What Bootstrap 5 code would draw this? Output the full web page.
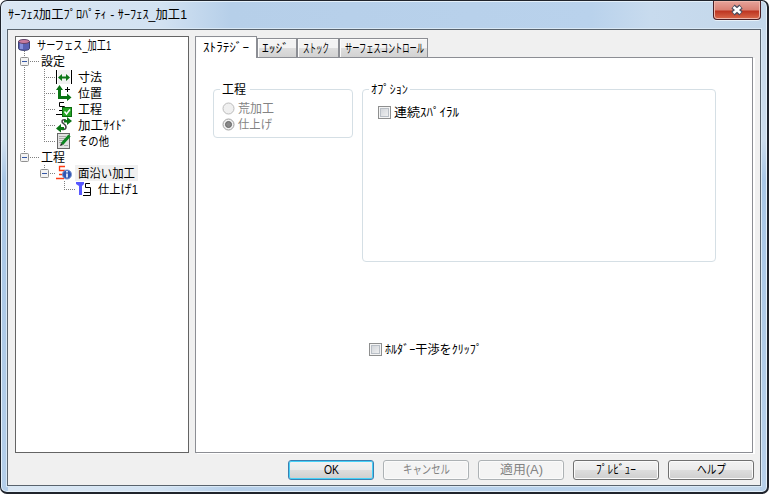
<!DOCTYPE html>
<html lang="ja">

<head>
    <meta charset="UTF-8">
    <meta name="viewport" content="width=device-width, initial-scale=1.0">
    <title>ｻｰﾌｪｽ加工ﾌﾟﾛﾊﾟﾃｨ</title>
    <link href="https://cdn.jsdelivr.net/npm/bootstrap@5.3.0/dist/css/bootstrap.min.css" rel="stylesheet">
    <style>
        body {
            width: 769px;
            height: 494px;
            overflow: hidden;
            background: #fff;
            color: #000;
            font: 12px/16px "Liberation Sans", "Noto Sans CJK JP", sans-serif;
        }

        .ventana {
            width: 769px;
            height: 494px;
            border: 1px solid #20242c;
            border-width: 1px 2px 2px 1px;
            border-radius: 7px;
            padding: 0 6px 6px;
            background:
                linear-gradient(#d3e1ef 0 110px, #a9c7e6 150px, #b5cfea 100%) 0 29px / 7px 100% no-repeat,
                linear-gradient(#ccdcec 0 110px, #a9c7e6 150px, #b9d1ea 100%) 100% 29px / 7px 100% no-repeat,
                linear-gradient(90deg, #dbe7f3 0, #d2e2f2 160px, #b6cfe9 230px, #b9d2ec 590px, #c8dbee 650px, #c3d7ea 100%);
            box-shadow: inset 0 0 0 1px #e4f0fa;
        }

        .titulo {
            height: 28px;
            padding: 0 0 0 1px;
        }

        .cerrar {
            width: 48px;
            height: 19px;
            border: 1px solid #4b1f25;
            border-top: 0;
            border-radius: 0 0 4px 4px;
            background: linear-gradient(#e6a49b 0, #d98073 9px, #bd3420 10px, #d96a4c 100%);
            box-shadow: inset 0 0 0 1px #efb6aa, 0 1px 0 #e8f1f8;
        }

        .cliente {
            height: 457px;
            border: 1px solid #59636d;
            background: #f0f0f0;
            padding: 6px 7px 0;
            box-shadow: 0 0 0 1px #d9e8f5;
        }

        .txt {
            display: inline-block;
            white-space: pre;
            transform-origin: 0 50%;
        }

        .arbol {
            width: 174px;
            height: 417px;
            border: 1px solid #646464;
            background: #fff;
        }

        .fila {
            height: 16px;
        }

        .fila svg {
            flex: none;
        }

        .nivel0 { padding-left: 1px; }
        .nivel1 { padding-left: 25px; }
        .nivel2 { padding-left: 40px; }
        .nivel3 { padding-left: 60px; }

        .nodo {
            height: 16px;
            margin-left: 3px;
            padding: 0 3px;
        }

        .nodo.sel {
            background: #f0f0f0;
        }

        .lineas {
            left: 0;
            top: 0;
        }

        .pestanas {
            height: 21px;
            padding-right: 1px;
        }

        .pestana {
            height: 19px;
            border: 1px solid #8c8e94;
            border-bottom: 0;
            background: linear-gradient(#f3f3f3 0 50%, #dedede 50%, #d2d2d2);
            box-shadow: inset 1px 1px 0 #fcfcfc;
            padding: 1px 0 0 4px;
        }

        .pestana.activa {
            height: 22px;
            margin-bottom: -1px;
            background: #fff;
            padding: 2px 0 0 7px;
            z-index: 1;
        }

        .panel {
            width: 558px;
            height: 396px;
            border: 1px solid #8c8e94;
            background: #fff;
            padding: 25px 17px;
            box-shadow: 2px 1px 0 #fff;
        }

        .grupo {
            border: 1px solid #d5dfe5;
            border-radius: 4px;
        }

        .leyenda {
            height: 16px;
            margin-top: -9px;
            background: #fff;
            align-self: flex-start;
        }

        .casilla {
            width: 13px;
            height: 13px;
            border: 1px solid #8e8f8f;
            background: linear-gradient(135deg, #cbcfd5, #f6f6f6);
            box-shadow: inset 0 0 0 1px #f4f4f4, inset 0 0 0 2px #b9bfc6;
        }

        .boton {
            width: 86px;
            height: 20px;
            padding: 0;
            border: 1px solid #707070;
            border-radius: 3px;
            background: linear-gradient(#f2f2f2 0, #ebebeb 49%, #dddddd 50%, #cfcfcf);
            box-shadow: inset 0 0 0 1px #fbfbfb;
            color: #000;
            font-size: 12px;
            line-height: 16px;
        }

        .boton.principal {
            border-color: #3c7fb1;
            box-shadow: inset 0 0 0 1px #46d1f8;
        }

        .boton:disabled {
            opacity: 1;
            border-color: #adb2b5;
            background: #f4f4f4;
            color: #838383;
        }

        .gris {
            color: #838383;
        }
    </style>
</head>

<body>
    <div class="ventana">
        <div class="titulo d-flex justify-content-between align-items-start">
            <span class="txt" style="margin-top: 5px" data-w="179">ｻｰﾌｪｽ加工ﾌﾟﾛﾊﾟﾃｨ - ｻｰﾌｪｽ_加工1</span>
            <div class="cerrar d-flex justify-content-center align-items-center">
                <svg width="14" height="12" viewBox="0 0 14 12">
                    <path d="M3 2.500L11 9.500M11 2.500L3 9.500" stroke="#4b4f60" stroke-width="5" />
                    <path d="M3.500 3L10.500 9M10.500 3L3.500 9" stroke="#fff" stroke-width="2.600" />
                </svg>
            </div>
        </div>
        <div class="cliente">
            <div class="d-flex justify-content-between" style="height: 417px">
                <div class="arbol position-relative">
                    <!-- líneas y botones de plegado -->
                    <svg class="lineas position-absolute" width="100" height="170">
                        <path d="M8.500 14V120M14 24.500H24M14 120.500H24M28.500 32V104M28 40.500H40M28 56.500H40M28 72.500H40M28 88.500H40M28 104.500H40M28.500 128V132M34 136.500H40M48.500 144V152M48 152.500H60" fill="none" stroke="#808080" stroke-dasharray="1 1" />
                        <g fill="#f3f3f3" stroke="#919191">
                            <rect x="4.500" y="20.500" width="8" height="8" rx="1" />
                            <rect x="4.500" y="116.500" width="8" height="8" rx="1" />
                            <rect x="24.500" y="132.500" width="8" height="8" rx="1" />
                        </g>
                        <path d="M6 24.500H11M6 120.500H11M26 136.500H31" stroke="#3557a5" />
                    </svg>
                    <div class="fila nivel0 d-flex">
                        <svg width="14" height="16">
                            <path d="M1.500 4.500V11.500C1.500 14 12.500 14 12.500 11.500V4.500Z" fill="#5a62b4" stroke="#3f4373" />
                            <path d="M3 6V12H6V6Z" fill="#8690dc" />
                            <ellipse cx="7" cy="4.500" rx="5.500" ry="2" fill="#c77b9f" stroke="#63456a" />
                        </svg>
                        <div class="nodo"><span class="txt" data-w="74">サーフェス_加工1</span></div>
                    </div>
                    <div class="fila nivel1"><span class="txt" data-w="24">設定</span></div>
                    <div class="fila nivel2 d-flex">
                        <svg width="16" height="16">
                            <path d="M2 1H14V15H2Z" fill="#f1f1f1" />
                            <path d="M.500 1V15M15.500 1V15" stroke="#000" />
                            <path d="M2 8.500L6 5V7.500H10V5L14 8.500L10 12V9.500H6V12Z" fill="#0a7414" />
                        </svg>
                        <div class="nodo"><span class="txt" data-w="24">寸法</span></div>
                    </div>
                    <div class="fila nivel2 d-flex">
                        <svg width="16" height="16">
                            <path d="M0 5L3.500 0L7 5H5V11H11V8.500L15.500 12.500L11 16V14H2V5Z" fill="#0a7414" />
                            <path d="M9 4.500H14M11.500 2V7" stroke="#000" />
                        </svg>
                        <div class="nodo"><span class="txt" data-w="24">位置</span></div>
                    </div>
                    <div class="fila nivel2 d-flex">
                        <svg width="16" height="16">
                            <path d="M8 1.500H3.500V5.500H8.500V9.500H3M0 13.500H8" fill="none" stroke="#000" />
                            <rect x="6.500" y="6.500" width="9" height="9" fill="#26a526" stroke="#0c6b10" />
                            <path d="M8.500 10.500L10.500 13L14 8.500" fill="none" stroke="#fff" stroke-width="1.500" />
                        </svg>
                        <div class="nodo"><span class="txt" data-w="24">工程</span></div>
                    </div>
                    <div class="fila nivel2 d-flex">
                        <svg width="16" height="16">
                            <path d="M10 3C5 2 5 5 8 7S11 14 5 12" fill="none" stroke="#444" stroke-width="1.500" />
                            <path d="M8 3H11V0L16 4L11 8V5.500H8ZM8 10H5V7L0 11.500L5 15.500V13H8Z" fill="#0a7414" />
                        </svg>
                        <div class="nodo"><span class="txt" data-w="50">加工ｻｲﾄﾞ</span></div>
                    </div>
                    <div class="fila nivel2 d-flex">
                        <svg width="16" height="16">
                            <rect x="1.500" y=".500" width="12" height="15" fill="#e2e2e2" stroke="#666" />
                            <path d="M3 3.500H10M3 5.500H9M3 7.500H8M3 9.500H6M8 12.500H12" stroke="#aaa" />
                            <path d="M13.500 2.500L6 11" stroke="#0b8520" stroke-width="3" />
                            <path d="M4 13L5 10L7 12Z" fill="#222" />
                        </svg>
                        <div class="nodo"><span class="txt" data-w="31">その他</span></div>
                    </div>
                    <div class="fila nivel1"><span class="txt" data-w="24">工程</span></div>
                    <div class="fila nivel2 d-flex">
                        <svg width="16" height="16">
                            <path d="M9 1.500H3.500V5.500H8.500V9.500H3M0 13.500H8" fill="none" stroke="#ff3c14" stroke-width="1.300" />
                            <circle cx="11" cy="9.500" r="4.500" fill="#2f55b4" stroke="#7d94cf" />
                            <path d="M11 6V7.500M11 8.500V12.500" stroke="#fff" stroke-width="1.600" />
                        </svg>
                        <div class="nodo sel"><span class="txt" data-w="57">面沿い加工</span></div>
                    </div>
                    <div class="fila nivel3 d-flex">
                        <svg width="16" height="16">
                            <path d="M0 1H8V3L6 5V14H3V5L0 3Z" fill="#5858ff" />
                            <path d="M14 2.500H9.500V6.500H14.500V11.500H8M7 14.500H14.500V11" fill="none" stroke="#000" />
                        </svg>
                        <div class="nodo"><span class="txt" data-w="40">仕上げ1</span></div>
                    </div>
                </div>
                <div>
                    <div class="pestanas d-flex align-items-end">
                        <div class="pestana activa position-relative" style="width: 62px"><span class="txt" data-w="46">ｽﾄﾗﾃｼﾞｰ</span></div>
                        <div class="pestana" style="width: 40px"><span class="txt" data-w="27">ｴｯｼﾞ</span></div>
                        <div class="pestana" style="width: 42px; padding-left: 5px"><span class="txt" data-w="26">ストック</span></div>
                        <div class="pestana" style="width: 89px; padding-left: 5px"><span class="txt" data-w="79">サーフェスコントロール</span></div>
                    </div>
                    <div class="panel">
                        <div class="d-flex align-items-start mt-1" style="height: 255px">
                            <div class="grupo d-flex flex-column" style="width: 140px; height: 49px; margin-top: 2px; padding-left: 6px">
                                <div class="leyenda px-1" style="padding-left: 2px !important"><span class="txt" data-w="24">工程</span></div>
                                <div class="d-flex align-items-center gris" style="height: 16px; margin: 3px 0 0 2px">
                                    <svg width="13" height="13"><circle cx="6.500" cy="6.500" r="5.500" fill="#f0f0f0" stroke="#bcbcbc" /></svg>
                                    <span class="txt" style="margin-left: 3px" data-w="36">荒加工</span>
                                </div>
                                <div class="d-flex align-items-center gris" style="height: 16px; margin-left: 2px">
                                    <svg width="13" height="13"><circle cx="6.500" cy="6.500" r="5.500" fill="#f0f0f0" stroke="#a0a0a0" /><circle cx="6.500" cy="6.500" r="3" fill="#888" stroke="#666" /></svg>
                                    <span class="txt" style="margin-left: 3px" data-w="34">仕上げ</span>
                                </div>
                            </div>
                            <div class="grupo d-flex flex-column" style="width: 354px; height: 173px; margin: 2px 0 0 9px; padding-left: 6px">
                                <div class="leyenda" style="padding: 0 2px"><span class="txt" data-w="37">ｵﾌﾟｼｮﾝ</span></div>
                                <div class="d-flex align-items-center" style="height: 16px; margin: 7px 0 0 9px">
                                    <span class="casilla"></span>
                                    <span class="txt" style="margin-left: 3px" data-w="65">連続ｽﾊﾟｲﾗﾙ</span>
                                </div>
                            </div>
                        </div>
                        <div class="d-flex align-items-center" style="height: 16px; margin: -1px 0 0 156px">
                            <span class="casilla"></span>
                            <span class="txt" style="margin-left: 3px" data-w="97">ﾎﾙﾀﾞｰ干渉をｸﾘｯﾌﾟ</span>
                        </div>
                    </div>
                </div>
            </div>
            <div class="d-flex justify-content-end" style="margin: 6px -1px 0 0; padding-top: 1px; gap: 9px">
                <button class="btn boton principal d-flex justify-content-center"><span class="txt" data-w="15">OK</span></button>
                <button class="btn boton d-flex justify-content-center" disabled><span class="txt" data-w="47">キャンセル</span></button>
                <button class="btn boton d-flex justify-content-center" disabled><span class="txt" data-w="43">適用(A)</span></button>
                <button class="btn boton d-flex justify-content-center"><span class="txt" data-w="40">ﾌﾟﾚﾋﾞｭｰ</span></button>
                <button class="btn boton d-flex justify-content-center"><span class="txt" data-w="29">ヘルプ</span></button>
            </div>
        </div>
    </div>

    <script>
        // ajusta cada texto a su ancho (kana estrecho)
        document.querySelectorAll(".txt").forEach(function (el) {
            let real = el.getBoundingClientRect().width;
            let ancho = Number(el.dataset.w);
            el.style.marginRight = (ancho - real) + "px";
            el.style.flex = "none";
            el.style.transform = "translateY(1px) scaleX(" + ancho / real + ")";
        });
    </script>
    <script src="https://cdn.jsdelivr.net/npm/bootstrap@5.3.0/dist/js/bootstrap.bundle.min.js"></script>
</body>

</html>
